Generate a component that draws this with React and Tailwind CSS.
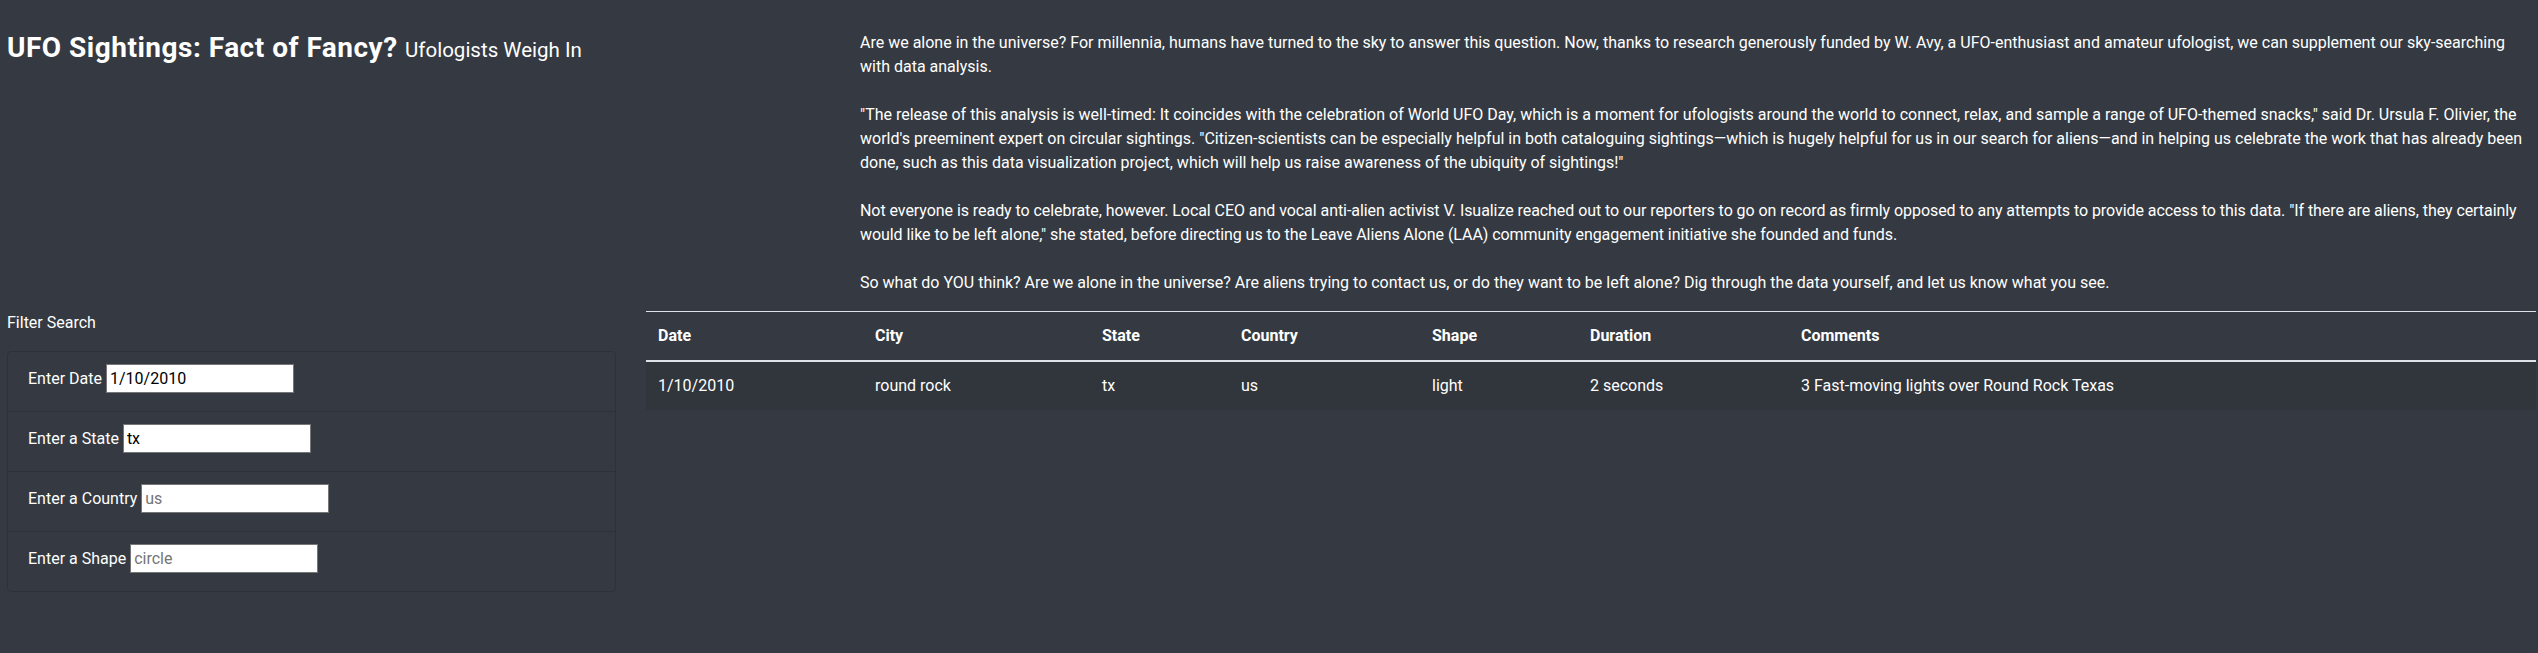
const paragraphs = [
  { text: "Are we alone in the universe? For millennia, humans have turned to the sky to answer this question. Now, thanks to research generously funded by W. Avy, a UFO-enthusiast and amateur ufologist, we can supplement our sky-searching with data analysis.", cls: "" },
  { text: "\"The release of this analysis is well-timed: It coincides with the celebration of World UFO Day, which is a moment for ufologists around the world to connect, relax, and sample a range of UFO-themed snacks,\" said Dr. Ursula F. Olivier, the world's preeminent expert on circular sightings. \"Citizen-scientists can be especially helpful in both cataloguing sightings\u2014which is hugely helpful for us in our search for aliens\u2014and in helping us celebrate the work that has already been done, such as this data visualization project, which will help us raise awareness of the ubiquity of sightings!\"", cls: "" },
  { text: "Not everyone is ready to celebrate, however. Local CEO and vocal anti-alien activist V. Isualize reached out to our reporters to go on record as firmly opposed to any attempts to provide access to this data. \"If there are aliens, they certainly would like to be left alone,\" she stated, before directing us to the Leave Aliens Alone (LAA) community engagement initiative she founded and funds.", cls: "tracking-[-0.06px]" },
  { text: "So what do YOU think? Are we alone in the universe? Are aliens trying to contact us, or do they want to be left alone? Dig through the data yourself, and let us know what you see.", cls: "" },
];

const filters = [
  { label: "Enter Date", value: "1/10/2010" },
  { label: "Enter a State", value: "tx" },
  { label: "Enter a Country", placeholder: "us" },
  { label: "Enter a Shape", placeholder: "circle" },
];

const columns = [
  { name: "Date", w: "w-[217px]" },
  { name: "City", w: "w-[227px]" },
  { name: "State", w: "w-[139px]" },
  { name: "Country", w: "w-[191px]" },
  { name: "Shape", w: "w-[158px]" },
  { name: "Duration", w: "w-[211px]" },
  { name: "Comments", w: "" },
];

const rows = [["1/10/2010", "round rock", "tx", "us", "light", "2 seconds", "3 Fast-moving lights over Round Rock Texas"]];

export default function App() {
  return (
    <div className="min-h-[653px] bg-[#353a42] pt-[31px] text-white font-['Roboto',sans-serif] text-[16px] leading-6">
      <div className="flex">
        <div className="w-[846px] shrink-0 pl-[7px]">
          <h3 className="text-[28px] font-bold leading-[1.2] tracking-[0.5px]">
            UFO Sightings: Fact of Fancy? <small className="text-[20.5px] font-normal tracking-normal">Ufologists Weigh In</small>
          </h3>
        </div>
        <div className="flex-1 pl-[14px] pr-[4px]">
          {paragraphs.map((p, i) => (
            <p key={i} className={`${p.cls} ${i === paragraphs.length - 1 ? "mb-4" : "mb-6"}`}>{p.text}</p>
          ))}
        </div>
      </div>

      <div className="flex">
        <div className="w-[634px] shrink-0 pl-[7px]">
          <div className="mb-4">Filter Search</div>
          <ul className="w-[609px] rounded-[4px] border border-[#2e3238]">
            {filters.map((f, i) => (
              <li key={f.label} className={`flex items-center px-5 pt-3 pb-[18px] ${i > 0 ? "border-t border-[#2e3238]" : ""}`}>
                <label>{f.label}</label>
                <input
                  readOnly
                  value={f.value || ""}
                  placeholder={f.placeholder}
                  className="ml-1 h-[29px] w-[188px] border border-[#767676] bg-white px-[3px] text-black placeholder:text-[#757575] outline-none"
                />
              </li>
            ))}
          </ul>
        </div>
        <div className="flex-1 pl-[12px] pr-[2px]">
          <table className="w-full border-collapse text-left">
            <thead>
              <tr className="border-t border-[#dee2e6]">
                {columns.map((c) => (
                  <th key={c.name} className={`${c.w} border-b-2 border-[#dee2e6] px-3 py-3 font-bold`}>{c.name}</th>
                ))}
              </tr>
            </thead>
            <tbody>
              {rows.map((r, i) => (
                <tr key={i} className="bg-[#31353c]">
                  {r.map((v, j) => (
                    <td key={j} className="px-3 py-3">{v}</td>
                  ))}
                </tr>
              ))}
            </tbody>
          </table>
        </div>
      </div>
    </div>
  );
}
